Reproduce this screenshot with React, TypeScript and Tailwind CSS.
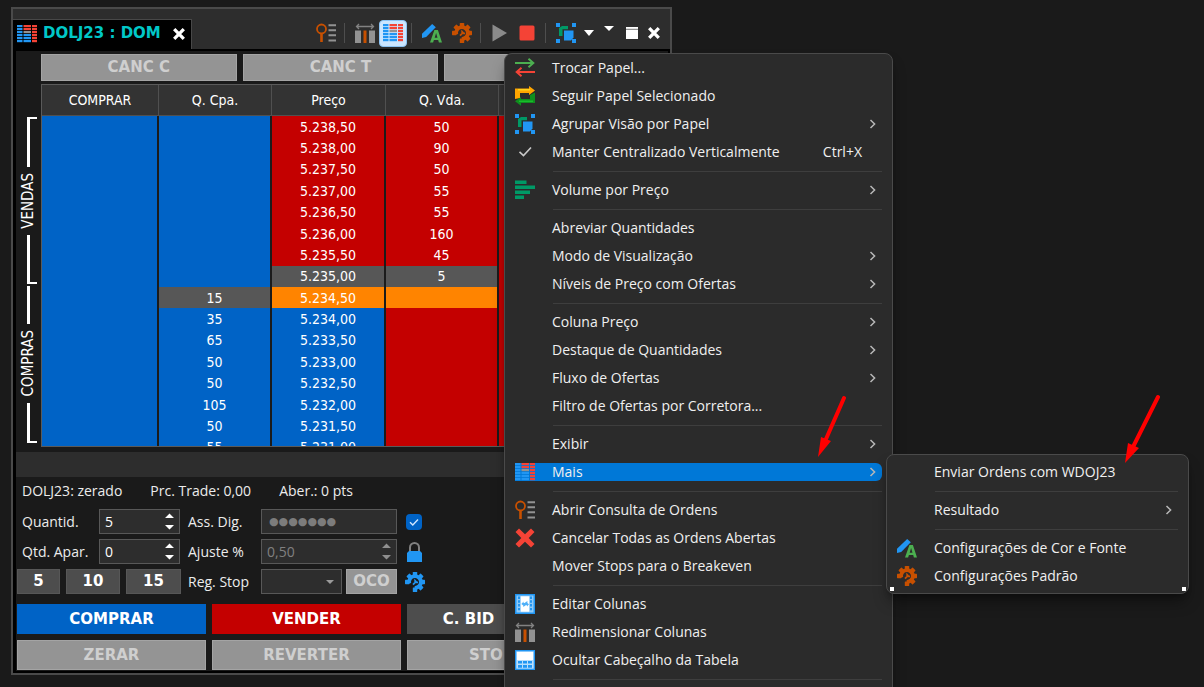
import type { ReactNode } from "react";
import clsx from "clsx";

type Tone = "blue" | "red" | "gray" | "orange";

interface BookRow {
  bid?: string;
  price: string;
  ask?: string;
  bidTone: Tone;
  priceTone: Tone;
  askTone: Tone;
}

interface MenuEntry {
  label: string;
  icon?: ReactNode;
  shortcut?: string;
  submenu?: boolean;
  active?: boolean;
}

const tones: Record<Tone, string> = {
  blue: "bg-[#0063c6]",
  red: "bg-[#c40000]",
  gray: "bg-[#575757]",
  orange: "bg-[#ff8400]",
};

const sell = (price: string, ask: string): BookRow => ({
  price,
  ask,
  bidTone: "blue",
  priceTone: "red",
  askTone: "red",
});

const buy = (price: string, bid: string): BookRow => ({
  price,
  bid,
  bidTone: "blue",
  priceTone: "blue",
  askTone: "red",
});

const book: BookRow[] = [
  sell("5.238,50", "50"),
  sell("5.238,00", "90"),
  sell("5.237,50", "50"),
  sell("5.237,00", "55"),
  sell("5.236,50", "55"),
  sell("5.236,00", "160"),
  sell("5.235,50", "45"),
  { price: "5.235,00", ask: "5", bidTone: "blue", priceTone: "gray", askTone: "gray" },
  { price: "5.234,50", bid: "15", bidTone: "gray", priceTone: "orange", askTone: "orange" },
  buy("5.234,00", "35"),
  buy("5.233,50", "65"),
  buy("5.233,00", "50"),
  buy("5.232,50", "50"),
  buy("5.232,00", "105"),
  buy("5.231,50", "50"),
  buy("5.231,00", "55"),
];

/* ---------- icons ---------- */

const Icon = ({ children, className = "size-5" }: { children: ReactNode; className?: string }) => (
  <svg viewBox="0 0 20 20" className={clsx("block shrink-0", className)} fill="none" aria-hidden="true">
    {children}
  </svg>
);

const DomIcon = () => (
  <Icon>
    {[1, 4, 7, 10, 13, 16].map((y, i) => (
      <g key={y}>
        <rect x="0" y={y} width="5.5" height="2.2" fill="#2196f3" />
        <rect x="6.5" y={y} width="7.5" height="2.2" fill={i < 2 ? "#f44336" : i === 2 ? "#929292" : "#2196f3"} />
        <rect x="15" y={y} width="5" height="2.2" fill="#f44336" />
      </g>
    ))}
  </Icon>
);

const OrdersIcon = () => (
  <Icon>
    <circle cx="5.5" cy="6" r="4.5" stroke="#c85000" strokeWidth="1.8" />
    <path d="M5.5 10.5V19" stroke="#c85000" strokeWidth="2.6" />
    <path d="M12.5 2.2H20M12.5 7.2H20M12.5 12.2H20M12.5 17.4H20" stroke="#929292" strokeWidth="2" />
  </Icon>
);

const ResizeIcon = () => (
  <Icon>
    <path d="M1.5 3.5h17M4 1 1.5 3.5 4 6M16 1l2.5 2.5L16 6" stroke="#828282" strokeWidth="1.3" />
    <path d="M0 7.5h6V20H0zM14 7.5h6V20h-6z" fill="#929292" />
    <path d="M8.5 7.5h3V20h-3z" fill="#c85000" />
  </Icon>
);

const ColorFontIcon = () => (
  <Icon>
    <path d="M10.2.9 13.8 4.3 4.2 13.9 0 15v-4.2z" fill="#2196f3" />
    <path d="M12.4 7h3.5L20 19.5h-3.1l-.7-2.4h-4.3l-.8 2.4H8zm1.7 3-1.4 4.8h2.8z" fill="#4caf50" />
  </Icon>
);

const GearIcon = ({ color = "#c85000" }: { color?: string }) => (
  <Icon>
    {[0, 45, 90, 135, 180, 270, 315].map((a) => (
      <rect key={a} x="7.8" y="0" width="4.4" height="4.5" rx=".6" fill={color} transform={`rotate(${a} 10 10)`} />
    ))}
    <path d="M4.3 11.6A5.9 5.9 0 1 1 9.6 15.9" stroke={color} strokeWidth="3.8" />
    <path d="M8 12.6 10.2 10.4V8.8L11.6 10.4H13" stroke={color} strokeWidth="1.8" />
  </Icon>
);

const GroupIcon = () => (
  <Icon>
    <path d="M0 0h4v4H0zM16 0h4v4h-4zM0 16h4v4H0zM16 16h4v4h-4z" fill="#2196f3" />
    <path d="M3 5V13h2.6V6.3h6.4V3H6z" fill="#009966" />
    <path d="M3 5h3.5v8H3z" fill="#009966" />
    <path d="M8 7.5h9.5v7L15 17.5H8z" fill="#2196f3" />
  </Icon>
);

const SwapIcon = () => (
  <Icon>
    <path d="M0 5h18M13.5.8 18.3 5l-4.8 4.2" stroke="#4caf50" strokeWidth="2" />
    <path d="M20 14H2M6.5 9.8 1.7 14l4.8 4.2" stroke="#f44336" strokeWidth="2" />
  </Icon>
);

const FollowIcon = () => (
  <Icon>
    <path d="M0 13V2.5h14V0l6 4.5-6 4.5V7H5v5z" fill="#ffa500" />
    <path d="M3 3h12v1.5H3z" fill="#ffd21c" />
    <path d="M20 6.5V17H6v2.8L0 15.3 6 11v2h9V9z" fill="#0f8f1e" />
    <path d="M4 14.5h14V16H4z" fill="#18bd2b" />
  </Icon>
);

const VolumeIcon = () => (
  <Icon>
    <path d="M0 .5h11.5v3.6H0zM0 5.5h20v3.6H0zM0 10.5h15v3.6H0zM0 15.5h9v3.6H0z" fill="#009966" />
  </Icon>
);

const CheckIcon = () => (
  <Icon>
    <path d="M4.5 9.8 8.5 13.6 16 5.5" stroke="#c8c8c8" strokeWidth="1.6" />
  </Icon>
);

const CancelIcon = () => (
  <Icon>
    <path d="M4 .5 10 6.3 16 .5 19.5 4 13.7 10l5.8 6-3.5 3.5-6-5.8-6 5.8L.5 16l5.8-6L.5 4z" fill="#f44336" />
  </Icon>
);

const EditColumnsIcon = () => (
  <Icon>
    <path d="M0 0h20v20H0z" fill="#2196f3" />
    <path d="M1.5 1.5h17v17h-17z" fill="#8fcaf8" />
    <path d="M5.8 2.3h8.4v15.4H5.8z" fill="#fff" />
    <path d="M4 2.5v15M16 2.5v15" stroke="#2196f3" strokeWidth="2" strokeDasharray="2.4 1.4" />
    <path d="m6.3 10 2.3-2.6v1.5h1l2.8-2v2l1.6 1.3-2 2.4v-1.4h-1.3L8.3 13v-1.6z" fill="#4fb0f8" />
  </Icon>
);

const HideHeaderIcon = () => (
  <Icon>
    <path d="M0 0h20v20H0z" fill="#2196f3" />
    <path d="M1.3 1.3h17.4v17.4H1.3z" fill="#b9defc" />
    <path d="M2 2h16v8H2z" fill="#fff" />
    <path d="M3 12.2h14M3 16.4h14" stroke="#2196f3" strokeWidth="2.6" strokeDasharray="4 1" />
  </Icon>
);

const CloseIcon = () => (
  <Icon className="size-3">
    <path d="M2 2 18 18M18 2 2 18" stroke="#fff" strokeWidth="5.5" />
  </Icon>
);

const Chevron = () => (
  <svg viewBox="0 0 8 12" className="h-3 w-2 shrink-0" fill="none" aria-hidden="true">
    <path d="M1.5 2 5.6 6 1.5 10" stroke="#b8b8b8" strokeWidth="1.5" />
  </svg>
);

/* ---------- title bar ---------- */

const ToolButton = ({ label, className, children }: { label: string; className: string; children: ReactNode }) => (
  <button type="button" aria-label={label} className={clsx("flex shrink-0 items-center justify-center", className)}>
    {children}
  </button>
);

const Divider = ({ className }: { className: string }) => (
  <span className={clsx("h-5 w-px shrink-0 bg-[#4e4e4e]", className)} />
);

const TitleBar = () => (
  <header className="flex h-10 items-end justify-between bg-[#2d2d2d]">
    <div className="flex h-[30px] items-center gap-1.5 border-t border-r border-[#484848] bg-black pr-1.5 pb-0.5 pl-1">
      <DomIcon />
      <h1 className="font-['DejaVu_Sans'] text-[15px] font-bold whitespace-nowrap text-[#00c8c8]">DOLJ23 : DOM</h1>
      <button type="button" aria-label="Fechar aba" className="ml-1.5">
        <CloseIcon />
      </button>
    </div>
    <div className="flex h-8 items-center pr-2.5">
      <ToolButton label="Consulta de ordens" className="w-5"><OrdersIcon /></ToolButton>
      <Divider className="ml-2" />
      <ToolButton label="Redimensionar" className="ml-2.5 w-5"><ResizeIcon /></ToolButton>
      <ToolButton label="DOM" className="ml-1 h-[27px] w-7 rounded-sm border border-[#8cc4f5] bg-[#cce6ff]">
        <DomIcon />
      </ToolButton>
      <Divider className="ml-1" />
      <ToolButton label="Cor e fonte" className="ml-2.5 w-5"><ColorFontIcon /></ToolButton>
      <ToolButton label="Configurações" className="ml-2.5 w-5"><GearIcon /></ToolButton>
      <Divider className="ml-2" />
      <ToolButton label="Iniciar" className="ml-2 w-5">
        <Icon><path d="M3.5 1.5 18 10 3.5 18.5z" fill="#8a8a8a" /></Icon>
      </ToolButton>
      <ToolButton label="Parar" className="ml-2 w-5">
        <Icon><rect x="2.5" y="2.5" width="15" height="15" rx="1.5" fill="#f44336" /></Icon>
      </ToolButton>
      <Divider className="ml-2" />
      <ToolButton label="Agrupar" className="ml-2.5 w-5"><GroupIcon /></ToolButton>
      <ToolButton label="Opções de grupo" className="ml-2 w-2.5">
        <svg viewBox="0 0 10 6" className="w-2.5" aria-hidden="true"><path d="M0 0h10L5 6z" fill="#fff" /></svg>
      </ToolButton>
      <ToolButton label="Minimizar" className="ml-2.5 w-2.5 pb-2.5">
        <svg viewBox="0 0 10 5" className="w-2.5" aria-hidden="true"><path d="M0 0h10L5 5z" fill="#fff" /></svg>
      </ToolButton>
      <ToolButton label="Maximizar" className="ml-3 w-3">
        <svg viewBox="0 0 12 12" className="w-3" aria-hidden="true">
          <path d="M0 0h12v12H0z" fill="#fff" />
          <path d="M0 2.3h12" stroke="#777" />
        </svg>
      </ToolButton>
      <ToolButton label="Fechar" className="ml-2.5 w-3"><CloseIcon /></ToolButton>
    </div>
  </header>
);

/* ---------- order book ---------- */

const SideLabel = ({ children }: { children: string }) => (
  <span className="ml-1 w-4 rotate-180 pt-1.5 pb-1.5 text-[15px] leading-4 [writing-mode:vertical-rl]">{children}</span>
);

const SideBrackets = () => (
  <div className="flex w-[25px] flex-col gap-0.5 pt-[33px] pr-1 pb-1 font-['DejaVu_Sans_Condensed'] text-white">
    <div className="flex flex-[16] flex-col">
      <span className="ml-[11px] flex-1 border-t-2 border-l-[3px] border-white" />
      <SideLabel>VENDAS</SideLabel>
      <span className="ml-[11px] flex-1 border-b-2 border-l-[3px] border-white" />
    </div>
    <div className="flex flex-[15] flex-col">
      <span className="ml-[11px] flex-1 border-l-[3px] border-white" />
      <SideLabel>COMPRAS</SideLabel>
      <span className="ml-[11px] flex-1 border-b-2 border-l-[3px] border-white" />
    </div>
  </div>
);

const cell = "border-r-2 border-[#1b1b1b] p-0 text-center";

const BookTable = () => (
  <div className="h-[363px] flex-1 overflow-hidden border border-[#5a5a5a]">
    <table className="h-[373px] w-full table-fixed border-separate border-spacing-0 font-['DejaVu_Sans_Condensed'] text-[14px] leading-4 text-white">
      <colgroup>
        <col className="w-[117px]" />
        <col className="w-[113px]" />
        <col className="w-[114px]" />
        <col className="w-[113px]" />
        <col />
      </colgroup>
      <thead>
        <tr className="h-[31px] bg-[#333]">
          {["COMPRAR", "Q. Cpa.", "Preço", "Q. Vda.", ""].map((h) => (
            <th key={h} className="h-[31px] border-r border-b border-[#505050] p-0 font-normal">{h}</th>
          ))}
        </tr>
      </thead>
      <tbody>
        {book.map((row) => (
          <tr key={row.price}>
            <td className={clsx(cell, tones.blue)} />
            <td className={clsx(cell, tones[row.bidTone])}>{row.bid}</td>
            <td className={clsx(cell, tones[row.priceTone])}>{row.price}</td>
            <td className={clsx(cell, tones[row.askTone])}>{row.ask}</td>
            <td className={clsx(cell, tones.red)} />
          </tr>
        ))}
      </tbody>
    </table>
  </div>
);

/* ---------- order form ---------- */

const bold = "font-['DejaVu_Sans'] text-[15px] font-bold";
const disabledButton = "border border-[#a4a4a4] bg-[#949494] text-[#cfcfcf]";
const field = "border border-[#585858] bg-[#2d2d2d]";

const Spinner = ({ id, value, dim }: { id: string; value: string; dim?: boolean }) => (
  <div className={clsx("flex h-[25px] w-full items-center justify-between pr-[5px]", field)}>
    <input
      id={id}
      defaultValue={value}
      disabled={dim}
      className={clsx("w-full min-w-0 bg-transparent pl-[5px] outline-none", dim ? "text-[#808080]" : "text-white")}
    />
    <svg viewBox="0 0 9 17" className="h-[17px] w-[9px] shrink-0" aria-hidden="true">
      <path d="M0 5 4.5.5 9 5zM0 12l4.5 4.5L9 12z" fill={dim ? "#8f8f8f" : "#fff"} />
    </svg>
  </div>
);

const OrderForm = () => (
  <form className="flex flex-col pr-[9px] pb-px pl-px text-[14px] leading-5 text-[#ececec]">
    <div className="flex h-8 items-center gap-7 pb-1 pl-[5px] whitespace-nowrap">
      <span>DOLJ23: zerado</span>
      <span>Prc. Trade: 0,00</span>
      <span>Aber.: 0 pts</span>
    </div>
    <div className="grid grid-cols-[82px_81px_81px_136px_30px] items-center gap-y-[5px] whitespace-nowrap">
      <label htmlFor="qty" className="pl-[5px]">Quantid.</label>
      <Spinner id="qty" value="5" />
      <label htmlFor="sign" className="pl-2">Ass. Dig.</label>
      <input
        id="sign"
        type="text"
        defaultValue="●●●●●●●"
        disabled
        className={clsx("h-[25px] w-full pl-[7px] font-['DejaVu_Sans'] text-[11px] text-[#7c7c7c]", field)}
      />
      <label className="relative ml-[9px] size-4">
        <input
          type="checkbox"
          defaultChecked
          aria-label="Lembrar assinatura"
          className="block size-4 appearance-none rounded-sm bg-[#0063c6]"
        />
        <svg viewBox="0 0 16 16" className="absolute inset-0" fill="none" aria-hidden="true">
          <path d="m4 8.3 2.8 2.7L12 5.5" stroke="#cfe6ff" strokeWidth="1.4" />
        </svg>
      </label>

      <label htmlFor="show" className="pl-[5px]">Qtd. Apar.</label>
      <Spinner id="show" value="0" />
      <label htmlFor="adj" className="pl-2">Ajuste %</label>
      <Spinner id="adj" value="0,50" dim />
      <button type="button" aria-label="Bloquear" className="ml-2">
        <Icon>
          <path d="M5 10V5.5a4.5 4.5 0 0 1 9 0V10" stroke="#808080" strokeWidth="2" />
          <path d="M4 9h11l2 2v9H2v-9z" fill="#2196f3" />
        </Icon>
      </button>

      <div className={clsx("col-span-2 grid h-[25px] grid-cols-[43px_54px_55px] gap-1.5 text-white", bold)}>
        {["5", "10", "15"].map((n) => (
          <button key={n} type="button" className="border border-[#575757] bg-[#4d4d4d] leading-none">{n}</button>
        ))}
      </div>
      <label htmlFor="stop" className="pl-2">Reg. Stop</label>
      <div className="flex gap-1">
        <div className="relative flex-1">
          <select id="stop" disabled className={clsx("block h-[25px] w-full appearance-none", field)} />
          <svg viewBox="0 0 8 4" className="absolute top-[11px] right-2 w-2" aria-hidden="true">
            <path d="M0 0h8L4 4z" fill="#9a9a9a" />
          </svg>
        </div>
        <button type="button" disabled className={clsx("h-[25px] w-[51px] leading-none", bold, disabledButton)}>OCO</button>
      </div>
      <button type="button" aria-label="Configurar stop" className="ml-2">
        <GearIcon color="#2196f3" />
      </button>
    </div>

    <div className={clsx("mt-2.5 grid grid-cols-[3fr_3fr_4fr] gap-1.5 text-white", bold)}>
      <button type="button" className="h-[30px] bg-[#0063c6]">COMPRAR</button>
      <button type="button" className="h-[30px] bg-[#c40000]">VENDER</button>
      <div className="grid grid-cols-2 gap-1.5">
        <button type="button" className="bg-[#4d4d4d]">C. BID</button>
        <button type="button" aria-label="Venda a mercado" className="bg-[#4d4d4d]" />
      </div>
    </div>
    <div className={clsx("mt-1.5 grid grid-cols-[3fr_3fr_4fr] gap-1.5", bold)}>
      <button type="button" disabled className={clsx("h-[30px]", disabledButton)}>ZERAR</button>
      <button type="button" disabled className={clsx("h-[30px]", disabledButton)}>REVERTER</button>
      <button type="button" disabled className={clsx("h-[30px] pl-[61px] text-left", disabledButton)}>STO</button>
    </div>
  </form>
);

/* ---------- menus ---------- */

const mainMenu: MenuEntry[][] = [
  [
    { label: "Trocar Papel...", icon: <SwapIcon /> },
    { label: "Seguir Papel Selecionado", icon: <FollowIcon /> },
    { label: "Agrupar Visão por Papel", icon: <GroupIcon />, submenu: true },
    { label: "Manter Centralizado Verticalmente", icon: <CheckIcon />, shortcut: "Ctrl+X" },
  ],
  [{ label: "Volume por Preço", icon: <VolumeIcon />, submenu: true }],
  [
    { label: "Abreviar Quantidades" },
    { label: "Modo de Visualização", submenu: true },
    { label: "Níveis de Preço com Ofertas", submenu: true },
  ],
  [
    { label: "Coluna Preço", submenu: true },
    { label: "Destaque de Quantidades", submenu: true },
    { label: "Fluxo de Ofertas", submenu: true },
    { label: "Filtro de Ofertas por Corretora..." },
  ],
  [
    { label: "Exibir", submenu: true },
    { label: "Mais", icon: <DomIcon />, submenu: true, active: true },
  ],
  [
    { label: "Abrir Consulta de Ordens", icon: <OrdersIcon /> },
    { label: "Cancelar Todas as Ordens Abertas", icon: <CancelIcon /> },
    { label: "Mover Stops para o Breakeven" },
  ],
  [
    { label: "Editar Colunas", icon: <EditColumnsIcon /> },
    { label: "Redimensionar Colunas", icon: <ResizeIcon /> },
    { label: "Ocultar Cabeçalho da Tabela", icon: <HideHeaderIcon /> },
  ],
  [],
];

const moreMenu: MenuEntry[][] = [
  [{ label: "Enviar Ordens com WDOJ23" }],
  [{ label: "Resultado", submenu: true }],
  [
    { label: "Configurações de Cor e Fonte", icon: <ColorFontIcon /> },
    { label: "Configurações Padrão", icon: <GearIcon /> },
  ],
];

const Menu = ({ groups, className }: { groups: MenuEntry[][]; className: string }) => (
  <div
    role="menu"
    className={clsx(
      "absolute rounded-lg border border-[#4a4a4a] bg-[#2b2b2b] px-2.5 text-[14px] leading-5 text-[#f0f0f0] shadow-lg shadow-black/40",
      className,
    )}
  >
    {groups.map((group, i) => (
      <div key={i}>
        {i > 0 && (
          <div className="flex h-2.5 items-center pl-[38px]">
            <span className="h-px flex-1 bg-[#3e3e3e]" />
          </div>
        )}
        {group.map((item) => (
          <button key={item.label} type="button" role="menuitem" className="flex h-7 w-full items-center text-left">
            <span className={clsx("flex h-[18px] flex-1 items-center", item.active && "rounded-r-md bg-[#0078d7]")}>
              <span className="w-[37px] shrink-0">{item.icon}</span>
              <span className="flex-1 whitespace-nowrap">{item.label}</span>
              {item.shortcut && <span className="pr-5">{item.shortcut}</span>}
              {item.submenu && <span className="pr-[5px]"><Chevron /></span>}
            </span>
          </button>
        ))}
      </div>
    ))}
  </div>
);

const Arrows = () => (
  <svg className="pointer-events-none absolute inset-0 size-full" aria-hidden="true">
    <g stroke="#f00" strokeWidth="4" strokeLinecap="round">
      <path d="M844 398 826 439M1158 397 1133 447" />
    </g>
    <path d="M818 457 821 437 831 441zM1125 463 1128 443 1139 448z" fill="#f00" />
  </svg>
);

const App = () => {
  return (
    <main className="relative h-screen overflow-hidden bg-[#1a1a1a] pt-[7px] pl-[11px] font-['Open_Sans',sans-serif]">
      <section className="w-full max-w-[661px] border-2 border-[#4a4a4a] bg-black">
        <TitleBar />
        <div className="mt-0.5 mr-0.5 mb-0.5 ml-[3px] bg-[#1a1a1a] pt-[3px]">
          <div className={clsx("grid grid-cols-3 gap-1.5 pr-7 pl-[25px]", bold)}>
            {["CANC C", "CANC T", ""].map((t) => (
              <button key={t} type="button" disabled className={clsx("h-[27px]", disabledButton)}>{t}</button>
            ))}
          </div>
          <div className="mt-[3px] flex">
            <SideBrackets />
            <BookTable />
          </div>
          <div className="mt-[5px] h-[25px] bg-[#2d2d2d]" />
          <OrderForm />
        </div>
      </section>

      <Menu groups={mainMenu} className="top-[53px] left-[504px] w-[389px] pb-7" />
      <Menu groups={moreMenu} className="top-[454px] left-[886px] w-[303px] py-[3px]" />
      <span className="absolute top-[587px] left-[890px] size-1 bg-white" />
      <span className="absolute top-[587px] left-[1182px] size-1 bg-white" />
      <Arrows />
    </main>
  );
};

export default App;
